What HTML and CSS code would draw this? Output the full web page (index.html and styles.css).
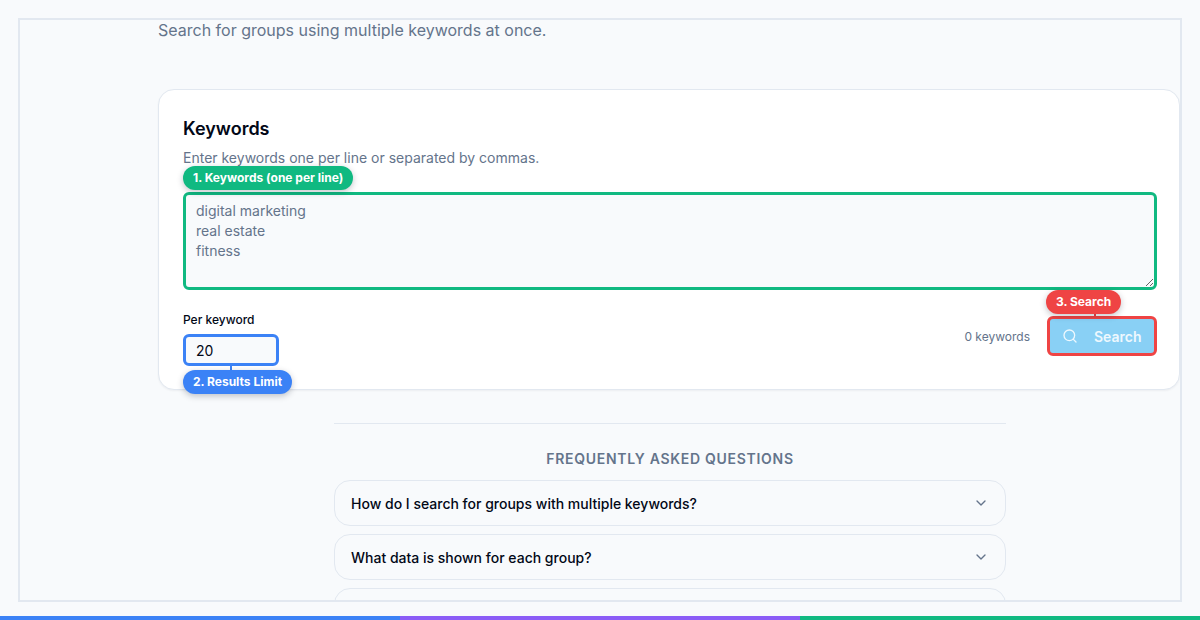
FILE: index.html
```html
<!DOCTYPE html>
<html lang="en">
<head>
  <meta charset="UTF-8">
  <meta name="viewport" content="width=device-width, initial-scale=1.0">
  <title>Bulk Group Search</title>
  <link rel="stylesheet" href="styles.css">
</head>
<body>
  <div class="frame">
    <div class="content">
      <p class="subtitle">Search for groups using multiple keywords at once.</p>

      <section class="card">
        <h2 class="card-title">Keywords</h2>
        <p class="card-desc">Enter keywords one per line or separated by commas.</p>

        <div class="field">
          <span class="badge badge-green badge-keywords">1. Keywords (one per line)</span>
          <textarea class="keywords" placeholder="digital marketing&#10;real estate&#10;fitness"></textarea>
        </div>

        <div class="controls">
          <div class="limit">
            <label class="limit-label" for="limit">Per keyword</label>
            <div class="field">
              <input class="limit-input" id="limit" type="text" value="20">
              <span class="connector connector-blue"></span>
              <span class="badge badge-blue badge-limit">2. Results Limit</span>
            </div>
          </div>
          <div class="actions">
            <span class="count">0 keywords</span>
            <div class="field">
              <span class="badge badge-red badge-search">3. Search</span>
              <span class="connector connector-red"></span>
              <button class="search-btn" type="button">
                <svg width="16" height="16" viewBox="0 0 24 24" fill="none" stroke="currentColor" stroke-width="2" stroke-linecap="round" stroke-linejoin="round">
                  <circle cx="11" cy="11" r="8"></circle>
                  <path d="m21 21-4.3-4.3"></path>
                </svg>
                <span>Search</span>
              </button>
            </div>
          </div>
        </div>
      </section>

      <section class="faq">
        <h3 class="faq-title">Frequently Asked Questions</h3>
        <div class="faq-item">
          <span>How do I search for groups with multiple keywords?</span>
          <svg class="chevron" width="16" height="16" viewBox="0 0 24 24" fill="none" stroke="currentColor" stroke-width="2" stroke-linecap="round" stroke-linejoin="round"><path d="m6 9 6 6 6-6"></path></svg>
        </div>
        <div class="faq-item">
          <span>What data is shown for each group?</span>
          <svg class="chevron" width="16" height="16" viewBox="0 0 24 24" fill="none" stroke="currentColor" stroke-width="2" stroke-linecap="round" stroke-linejoin="round"><path d="m6 9 6 6 6-6"></path></svg>
        </div>
        <div class="faq-item"></div>
      </section>
    </div>
  </div>

  <div class="stripe">
    <span class="stripe-blue"></span>
    <span class="stripe-purple"></span>
    <span class="stripe-green"></span>
  </div>
</body>
</html>
```
FILE: styles.css
```css
* {
  box-sizing: border-box;
}

html,
body {
  height: 100%;
}

body {
  display: flex;
  flex-direction: column;
  height: 620px;
  margin: 0;
  overflow: hidden;
  font-family: Inter, "Liberation Sans", sans-serif;
  color: #020817;
  background-color: #f8fafc;
}

.frame {
  height: 584px;
  margin: 18px 18px 14px;
  border: 2px solid #e2e8f0;
  overflow: hidden;
}

.content {
  padding-left: 138px;
}

.subtitle {
  margin: 0 0 49px;
  font-size: 16px;
  line-height: 20px;
  color: #64748b;
}

/* Main card */
.card {
  height: 301px;
  padding: 24px;
  background-color: #fff;
  border: 1px solid #e2e8f0;
  border-radius: 16px;
  box-shadow: 0 1px 2px rgba(15, 23, 42, 0.05);
}

.card-title {
  margin: 3px 0 0;
  font-size: 18px;
  line-height: 24px;
  font-weight: 600;
}

.card-desc {
  margin: 7px 0 0;
  height: 44px;
  font-size: 14px;
  line-height: 20px;
  color: #64748b;
}

.field {
  position: relative;
}

.keywords {
  display: block;
  width: 974px;
  height: 98px;
  padding: 6px 10px;
  font-family: inherit;
  font-size: 14px;
  line-height: 20px;
  background-color: #f8fafc;
  border: 3px solid #10b981;
  border-radius: 6px;
  outline: none;
}

.keywords::placeholder {
  color: #64748b;
  opacity: 1;
}

.controls {
  display: flex;
  justify-content: space-between;
  align-items: flex-start;
  width: 974px;
  margin-top: 22px;
}

.limit-label {
  display: block;
  height: 22px;
  font-size: 12px;
  line-height: 16px;
  font-weight: 500;
}

.limit-input {
  display: block;
  width: 96px;
  height: 32px;
  padding: 0 10px;
  font-family: inherit;
  font-size: 14px;
  color: #020817;
  background-color: #f8fafc;
  border: 3px solid #3b82f6;
  border-radius: 6px;
  outline: none;
}

.actions {
  display: flex;
  align-items: center;
  gap: 17px;
  margin-top: 4px;
}

.count {
  font-size: 12px;
  color: #64748b;
}

.search-btn {
  display: flex;
  align-items: center;
  gap: 16px;
  width: 110px;
  height: 40px;
  padding: 0 0 0 12px;
  font-family: inherit;
  font-size: 14px;
  font-weight: 600;
  color: #eef8fe;
  background-color: #89d0f5;
  border: 3px solid #ef4444;
  border-radius: 6px;
}

/* Numbered callouts */
.badge {
  position: absolute;
  z-index: 2;
  height: 24px;
  padding: 0 10px;
  font-size: 12px;
  line-height: 24px;
  font-weight: 700;
  color: #fff;
  white-space: nowrap;
  border-radius: 12px;
  box-shadow: 0 2px 6px rgba(15, 23, 42, 0.25);
}

.badge-green {
  background-color: #10b981;
}

.badge-blue {
  background-color: #3b82f6;
}

.badge-red {
  background-color: #ef4444;
}

.badge-keywords {
  top: -26px;
  left: 0;
}

.badge-limit {
  top: 36px;
  left: 0;
}

.badge-search {
  top: -26px;
  left: -1px;
}

.connector {
  position: absolute;
  width: 2px;
  height: 4px;
}

.connector-blue {
  top: 32px;
  left: 47px;
  background-color: #3b82f6;
}

.connector-red {
  top: -3px;
  left: 47px;
  background-color: #ef4444;
}

/* FAQ */
.faq {
  width: 672px;
  margin: 33px 0 0 176px;
  padding-top: 25px;
  border-top: 1px solid #e2e8f0;
}

.faq-title {
  margin: 0 0 11px;
  font-size: 14px;
  line-height: 20px;
  font-weight: 600;
  letter-spacing: 0.7px;
  text-align: center;
  text-transform: uppercase;
  color: #64748b;
}

.faq-item {
  display: flex;
  justify-content: space-between;
  align-items: center;
  height: 46px;
  margin-bottom: 8px;
  padding: 0 16px;
  font-size: 14px;
  font-weight: 500;
  border: 1px solid #e2e8f0;
  border-radius: 16px;
}

.chevron {
  color: #64748b;
}

/* Bottom stripe */
.stripe {
  display: flex;
  height: 4px;
}

.stripe span {
  flex: 1;
}

.stripe-blue {
  background-color: #3b82f6;
}

.stripe-purple {
  background-color: #8b5cf6;
}

.stripe-green {
  background-color: #10b981;
}
```
